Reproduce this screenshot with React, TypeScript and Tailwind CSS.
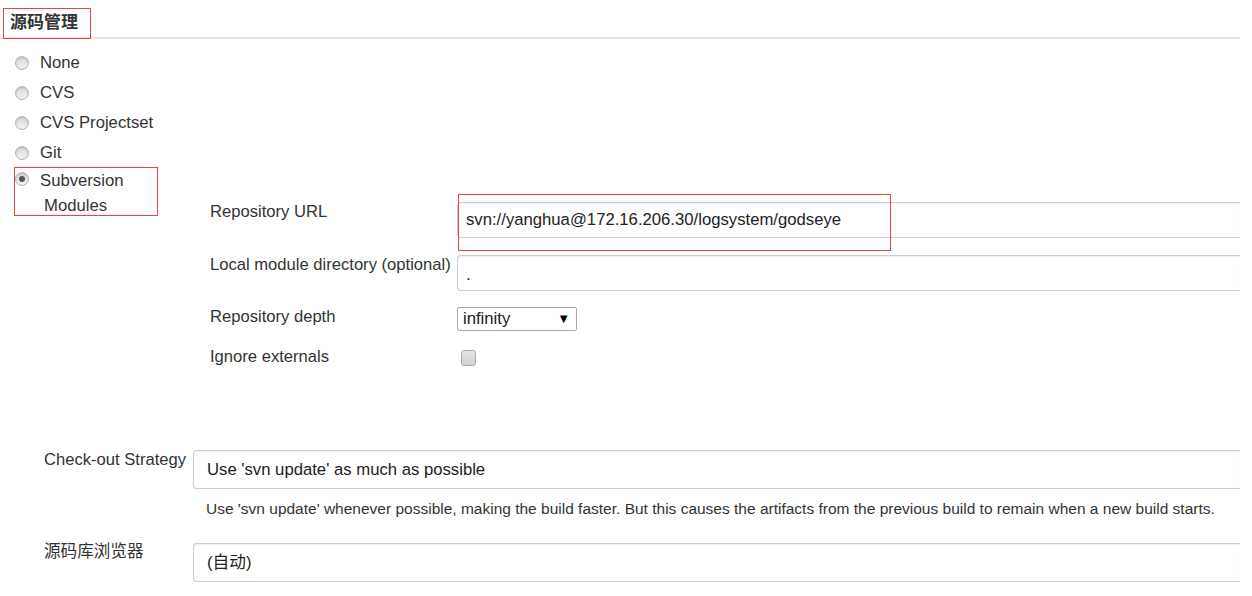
import React from 'react'

const font = { fontFamily: '"Liberation Sans", Arial, "Noto Sans CJK SC", sans-serif' }

const Radio = ({ checked = false }: { checked?: boolean }) => (
  <span className="w-[14px] h-[14px] rounded-full border border-[#b4b4b4] bg-gradient-to-b from-[#d9d9d9] to-[#f2f2f2] shadow-[inset_0_1px_2px_rgba(0,0,0,0.15)] flex items-center justify-center shrink-0">
    {checked && <span className="w-[6px] h-[6px] rounded-full bg-[#555]"></span>}
  </span>
)

const scmOptions = ['None', 'CVS', 'CVS Projectset', 'Git']

const App = () => {
  return (
    <div className="relative w-[1252px] h-[596px] bg-white overflow-hidden text-[#333]" style={font}>
      <div className="w-[1240px]">
        {/* Section title */}
        <div className="h-[39px] border-b-2 border-[#e6e6e6] pl-[10px] pt-[11px]">
          <span className="text-[17px] leading-[22px] font-bold text-[#333]">源码管理</span>
        </div>

        {/* SCM radios */}
        <div className="pt-[9px]">
          {scmOptions.map((o) => (
            <div key={o} className="h-[30px] flex items-center pl-[15px]">
              <Radio />
              <span className="ml-[11px] text-[16.7px] leading-[20px]">{o}</span>
            </div>
          ))}
          <div className="h-[26px] flex items-center pl-[15px]">
            <span className="-mt-[4px]"><Radio checked /></span>
            <span className="ml-[11px] text-[16.7px] leading-[20px]">Subversion</span>
          </div>

          <div className="flex">
            <div className="w-[210px] shrink-0 pl-[44px] text-[16.7px] leading-[24px]">Modules</div>

            {/* Subversion module fields */}
            <div className="flex-1 pt-[8px]">
              <div className="flex">
                <div className="w-[247px] shrink-0 text-[16.6px] leading-[20px]">Repository URL</div>
                <div className="flex-1 h-[36px] border border-r-0 border-[#cccccc] rounded-l-[4px] shadow-[inset_0_1px_1px_rgba(0,0,0,0.06)] flex items-center pl-[8px] text-[16.7px] text-[#222]">
                  svn://yanghua@172.16.206.30/logsystem/godseye
                </div>
              </div>
              <div className="flex mt-[17px]">
                <div className="w-[247px] shrink-0 text-[16.6px] leading-[20px] whitespace-nowrap">Local module directory (optional)</div>
                <div className="flex-1 h-[36px] border border-r-0 border-[#cccccc] rounded-l-[4px] shadow-[inset_0_1px_1px_rgba(0,0,0,0.06)] flex items-center pl-[8px] text-[16.7px] text-[#222]">
                  <span className="mt-[4px]">.</span>
                </div>
              </div>
              <div className="flex mt-[16px]">
                <div className="w-[247px] shrink-0 text-[16.6px] leading-[20px]">Repository depth</div>
                <div className="w-[120px] h-[24px] border border-[#a9a9a9] rounded-[2px] flex items-center justify-between pl-[5px] pr-[6px] text-[16.7px] text-[#222]">
                  <span>infinity</span>
                  <span className="text-[13px] text-black">▼</span>
                </div>
              </div>
              <div className="flex mt-[16px]">
                <div className="w-[247px] shrink-0 text-[16.6px] leading-[20px]">Ignore externals</div>
                <span className="ml-[4px] mt-[3px] w-[15px] h-[16px] rounded-[3px] border border-[#a9a9a9] bg-gradient-to-b from-[#e4e4e4] to-[#d2d2d2]"></span>
              </div>
            </div>
          </div>
        </div>

        {/* Check-out strategy */}
        <div className="flex mt-[83px]">
          <div className="w-[193px] shrink-0 pl-[44px] text-[16.6px] leading-[20px] whitespace-nowrap">Check-out Strategy</div>
          <div className="flex-1 h-[39px] border border-r-0 border-[#cccccc] rounded-l-[4px] shadow-[inset_0_1px_1px_rgba(0,0,0,0.06)] flex items-center pl-[13px] text-[16.7px] text-[#222]">
            Use 'svn update' as much as possible
          </div>
        </div>
        <div className="pl-[206px] mt-[10px] text-[15.5px] leading-[20px] text-[#333] whitespace-nowrap">
          Use 'svn update' whenever possible, making the build faster. But this causes the artifacts from the previous build to remain when a new build starts.
        </div>

        {/* Repository browser */}
        <div className="flex mt-[24px]">
          <div className="w-[193px] shrink-0 pl-[44px] text-[16.6px] leading-[20px] -mt-[1px]">源码库浏览器</div>
          <div className="flex-1 h-[39px] border border-r-0 border-[#cccccc] rounded-l-[4px] shadow-[inset_0_1px_1px_rgba(0,0,0,0.06)] flex items-center pl-[13px] text-[16.7px] text-[#222]">
            (自动)
          </div>
        </div>
      </div>

      {/* Red annotation boxes */}
      <div className="absolute left-[3px] top-[8px] w-[88px] h-[31px] border-[1.5px] border-[#f0443a]"></div>
      <div className="absolute left-[14px] top-[167px] w-[144px] h-[49px] border-[1.5px] border-[#f0443a]"></div>
      <div className="absolute left-[458px] top-[194px] w-[433px] h-[57px] border-[1.5px] border-[#f0443a]"></div>
    </div>
  )
}

export default App
